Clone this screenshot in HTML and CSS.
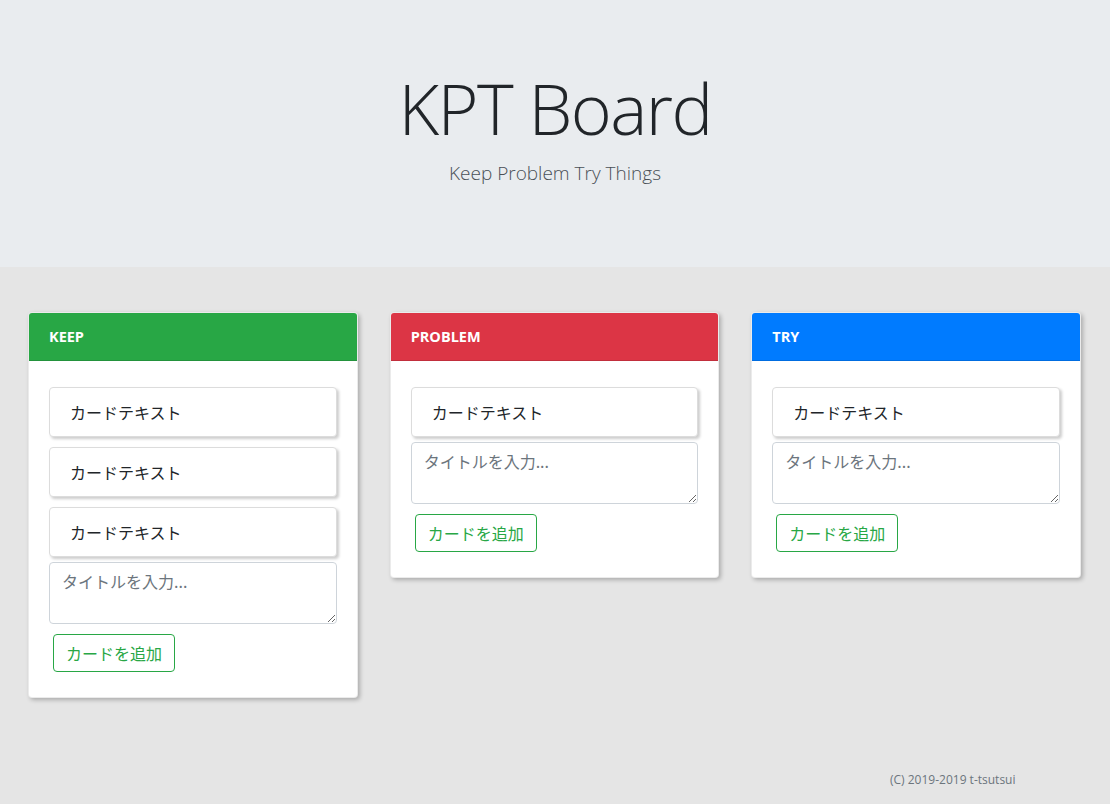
FILE: index.html
```html
<!DOCTYPE html>
<html lang="ja">
<head>
<meta charset="utf-8">
<title>KPT Board</title>
<link rel="stylesheet" href="styles.css">
</head>
<body>
<header class="jumbotron">
  <h1 class="title">KPT Board</h1>
  <p class="lead">Keep Problem Try Things</p>
</header>
<main class="board">
  <section class="column">
    <div class="column-header keep">KEEP</div>
    <div class="column-body">
      <div class="item">カードテキスト</div>
      <div class="item">カードテキスト</div>
      <div class="item">カードテキスト</div>
      <textarea class="input" rows="2" placeholder="タイトルを入力..."></textarea>
      <button class="add-btn">カードを追加</button>
    </div>
  </section>
  <section class="column">
    <div class="column-header problem">PROBLEM</div>
    <div class="column-body">
      <div class="item">カードテキスト</div>
      <textarea class="input" rows="2" placeholder="タイトルを入力..."></textarea>
      <button class="add-btn">カードを追加</button>
    </div>
  </section>
  <section class="column">
    <div class="column-header try">TRY</div>
    <div class="column-body">
      <div class="item">カードテキスト</div>
      <textarea class="input" rows="2" placeholder="タイトルを入力..."></textarea>
      <button class="add-btn">カードを追加</button>
    </div>
  </section>
</main>
<footer class="footer">(C) 2019-2019 t-tsutsui</footer>
</body>
</html>
```

FILE: styles.css
```css
* { box-sizing: border-box; }
html, body { margin: 0; padding: 0; }
body {
  background: #e5e5e5;
  font-family: "Open Sans", "Noto Sans CJK JP", sans-serif;
  color: #212529;
  font-size: 16px;
  line-height: 1.5;
  min-height: 804px;
  display: flex;
  flex-direction: column;
}
.jumbotron {
  background: #e9ecef;
  height: 267px;
  padding-top: 66px;
  text-align: center;
}
.title {
  margin: 0;
  font-size: 70px;
  font-weight: 300;
  line-height: 1.2;
  letter-spacing: -1.6px;
}
.lead {
  margin: 9px 0 0;
  font-size: 19px;
  font-weight: 300;
  color: #495057;
}
.board {
  display: flex;
  align-items: flex-start;
  gap: 32px;
  padding: 45px 29px 0 28px;
  flex: 1;
}
.column {
  width: 331px;
  background: #fff;
  border: 1px solid rgba(0,0,0,.08);
  border-radius: 4px;
  box-shadow: 2px 2px 4px rgba(0,0,0,.25);
  overflow: hidden;
}
.column-header {
  height: 48px;
  padding: 0 20px;
  display: flex;
  align-items: center;
  color: #fff;
  font-weight: 700;
  font-size: 14.5px;
  border-bottom: 1px solid rgba(0,0,0,.12);
}
.keep { background: #28a745; }
.problem { background: #dc3545; }
.try { background: #007bff; }
.column-body {
  padding: 21px 20px 20px;
  display: flex;
  flex-direction: column;
  align-items: flex-start;
}
.item {
  width: 100%;
  margin: 5px 0;
  padding: 12px 20px 12px;
  border: 1px solid #dcdcdc;
  border-radius: 4px;
  box-shadow: 2px 2px 3px rgba(0,0,0,.2);
  font-family: "Noto Sans CJK JP", sans-serif;
  font-size: 16px;
  line-height: 24px;
  background: #fff;
}
.input {
  width: 100%;
  margin: 0 0 5px;
  padding: 6px 12px;
  height: 62px;
  border: 1px solid #ced4da;
  border-radius: 4px;
  font-family: "Noto Sans CJK JP", sans-serif;
  font-size: 16px;
  line-height: 24px;
  color: #495057;
  resize: vertical;
}
.input::placeholder { color: #6c757d; opacity: 1; }
.add-btn {
  margin: 5px 4px;
  height: 38px;
  padding: 0 12px;
  background: #fff;
  border: 1px solid #28a745;
  color: #28a745;
  border-radius: 4px;
  font-family: "Noto Sans CJK JP", sans-serif;
  font-size: 16px;
  line-height: 24px;
}
.footer {
  font-size: 12px;
  color: #6c757d;
  padding: 0 0 15px 890px;
}
```
